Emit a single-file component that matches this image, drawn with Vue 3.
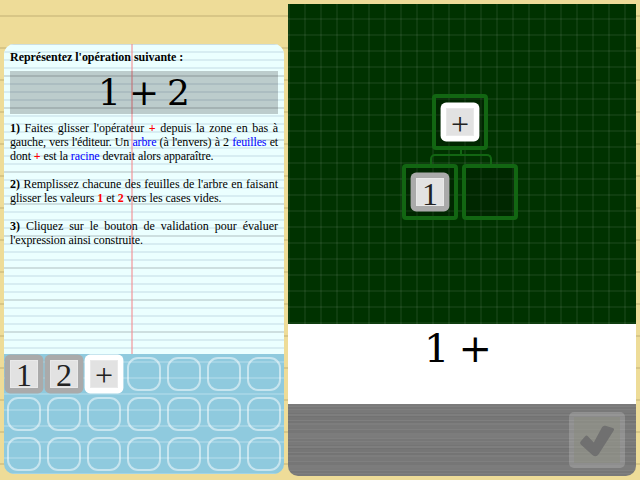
<script setup>
const tray = [
  { value: '1' }, { value: '2' }, { value: '+', operator: true },
  ...Array.from({ length: 18 }, () => null)
]
</script>

<template>
  <main class="page">
    <section class="sheet">
      <div class="instructions">
        <h1>Représentez l'opération suivante :</h1>
        <div class="formula"><span>1</span><span>+</span><span>2</span></div>
        <p>
          <span class="line full"><b>1)</b> Faites glisser l'opérateur <b class="red">+</b> depuis la zone en bas à</span>
          <span class="line full snug">gauche, vers l'éditeur. Un <span class="blue">arbre</span> (à l'envers) à 2 <span class="blue">feuilles</span> et</span>
          <span class="line tight">dont <b class="red">+</b> est la <span class="blue">racine</span> devrait alors apparaître.</span>
        </p>
        <p>
          <span class="line full"><b>2)</b> Remplissez chacune des feuilles de l'arbre en faisant</span>
          <span class="line loose">glisser les valeurs <b class="red">1</b> et <b class="red">2</b> vers les cases vides.</span>
        </p>
        <p>
          <span class="line full"><b>3)</b> Cliquez sur le bouton de validation pour évaluer</span>
          <span class="line tight">l'expression ainsi construite.</span>
        </p>
      </div>
      <div class="tray">
        <div v-for="(item, i) in tray" :key="i" class="cell">
          <div v-if="item" class="tile" :class="{ operator: item.operator }">
            <svg viewBox="0 0 40 40"><rect x=".6" y=".6" width="38.8" height="38.8" rx="5.5" /></svg>
            <span>{{ item.value }}</span>
          </div>
          <div v-else class="empty"></div>
        </div>
      </div>
    </section>

    <section class="editor">
      <div class="board">
        <div class="tree">
          <div class="node">
            <div class="tile operator">
              <svg viewBox="0 0 40 40"><rect x=".6" y=".6" width="38.8" height="38.8" rx="5.5" /></svg>
              <span>+</span>
            </div>
          </div>
          <div class="stem"></div>
          <div class="fork"></div>
          <div class="leaves">
            <div class="node">
              <div class="tile">
                <svg viewBox="0 0 40 40"><rect x=".6" y=".6" width="38.8" height="38.8" rx="5.5" /></svg>
                <span>1</span>
              </div>
            </div>
            <div class="node"></div>
          </div>
        </div>
      </div>
      <div class="result"><span>1</span><span>+</span></div>
      <div class="toolbar">
        <button class="validate" aria-label="Valider">
          <svg viewBox="0 0 56 56" width="56" height="56">
            <path d="M11.6 29.4 L16.2 24.2 Q17.4 23 18.8 24.2 L24.8 30.6 L33 15.2 Q34.2 13.2 36.4 13.8 L43.8 16 Q45.8 16.8 44.6 18.8 L29.8 42 Q27 46 23.4 43 L11.8 32.4 Q10.4 31 11.6 29.4 Z" />
          </svg>
        </button>
      </div>
    </section>
  </main>
</template>

<style>
body { margin: 0; }
</style>

<style scoped>
.page {
  box-sizing: border-box;
  width: 640px;
  height: 480px;
  padding: 4px;
  display: flex;
  gap: 4px;
  overflow: hidden;
  background: repeating-linear-gradient(#eedc98 0 15px, #d8c686 15px 17px, #eedc98 17px 32px);
  font-family: "Liberation Serif", serif;
}
.sheet {
  width: 280px;
  height: 430px;
  margin-top: 40px;
  border-radius: 10px;
  overflow: hidden;
}
.instructions {
  box-sizing: border-box;
  height: 310px;
  padding: 6px;
  font-size: 12px;
  line-height: 14px;
  color: #000;
  background:
    linear-gradient(90deg, transparent 127px, rgba(244, 140, 145, .55) 127px 129px, transparent 129px),
    linear-gradient(#cddfe0 2px, transparent 2px) 0 31px / 100% 32px,
    linear-gradient(#d7edf2 2px, transparent 2px) 0 7px / 100% 8px,
    #ebffff;
}
h1 { margin: 0; font-size: 12px; line-height: 14px; font-weight: bold; letter-spacing: -.03px; }
.formula {
  display: flex;
  justify-content: center;
  gap: 8px;
  height: 43px;
  margin-top: 7px;
  background: rgba(0, 0, 0, .2);
  font: 36px/43px "DejaVu Serif", serif;
}
p { margin: 0 0 14px; }
.formula + p { margin-top: 7px; }
.line { display: block; white-space: nowrap; }
.full { text-align: justify; text-align-last: justify; white-space: normal; }
.snug { letter-spacing: -.15px; }
.tight { letter-spacing: -.1px; }
.loose { letter-spacing: -.05px; }
.blue { color: #0000ff; }
.red { color: #ff0000; }
.tray {
  display: grid;
  grid-template-columns: repeat(7, 40px);
  grid-auto-rows: 40px;
  background: linear-gradient(#a3d4e5 2px, transparent 2px) 0 7px / 100% 16px, #8fcade;
}
.cell { display: flex; align-items: center; justify-content: center; }
.empty {
  box-sizing: border-box;
  width: 34px;
  height: 34px;
  border: 2px solid rgba(255, 255, 255, .5);
  border-radius: 11px;
}
.tile {
  display: grid;
  place-items: center;
  width: 40px;
  height: 40px;
}
.tile svg { grid-area: 1 / 1; width: 40px; height: 40px; fill: #aaa; }
.tile span {
  grid-area: 1 / 1;
  z-index: 1;
  box-sizing: border-box;
  width: 28px;
  height: 28px;
  border: 1px solid #e9e9e9;
  background: #e2e2e2;
  color: #222;
  text-align: center;
  font: 32px/30px "Liberation Serif", serif;
}
.cell .tile span { line-height: 28px; }
.tile.operator svg { fill: #fff; }
.editor {
  width: 348px;
  height: 472px;
  border-radius: 0 0 10px 10px;
  overflow: hidden;
}
.board {
  height: 320px;
  background:
    linear-gradient(rgba(255, 255, 255, .06) 2px, transparent 2px) 0 14px / 100% 16px,
    linear-gradient(90deg, rgba(255, 255, 255, .06) 2px, transparent 2px) 0 0 / 16px 100%,
    #003200;
}
.tree {
  display: flex;
  flex-direction: column;
  align-items: center;
  width: 116px;
  padding: 90px 0 0 114px;
}
.node {
  box-sizing: border-box;
  width: 56px;
  height: 56px;
  border: 4px solid #126612;
  border-radius: 4px;
  background: rgba(0, 0, 0, .22);
  display: flex;
  align-items: center;
  justify-content: center;
}
.stem { width: 2px; height: 4px; margin-left: 2px; background: #126612; }
.fork {
  box-sizing: border-box;
  width: 62px;
  height: 10px;
  margin-left: 2px;
  border: 2px solid #126612;
  border-bottom: 0;
  border-radius: 5px 5px 0 0;
}
.leaves { display: flex; gap: 4px; }
.result {
  display: flex;
  justify-content: center;
  gap: 9px;
  height: 80px;
  padding-right: 8px;
  box-sizing: border-box;
  background: #fff;
  font: 40px/49px "DejaVu Serif", serif;
}
.toolbar {
  box-sizing: border-box;
  height: 72px;
  padding: 8px 11px;
  display: flex;
  justify-content: flex-end;
  background: repeating-linear-gradient(#7b7b7b 0 2px, #808080 2px 3px, #777 3px 5px, #7f7f7f 5px 6px, #797979 6px 9px, #747474 9px 10px, #7e7e7e 10px 12px, #727272 12px 13px, #767676 13px 16px, #7f7f7f 16px 17px, #747474 17px 19px, #7d7d7d 19px 21px, #787878 21px 25px, #7f7f7f 25px 26px, #767676 26px 29px, #7c7c7c 29px 32px);
}
.validate {
  box-sizing: border-box;
  width: 56px;
  height: 56px;
  padding: 0;
  border: 5px solid rgba(255, 255, 255, .18);
  border-radius: 5px;
  background: rgba(160, 162, 148, .5) padding-box;
}
.validate svg { display: block; margin: -5px; fill: #707070; }
</style>
